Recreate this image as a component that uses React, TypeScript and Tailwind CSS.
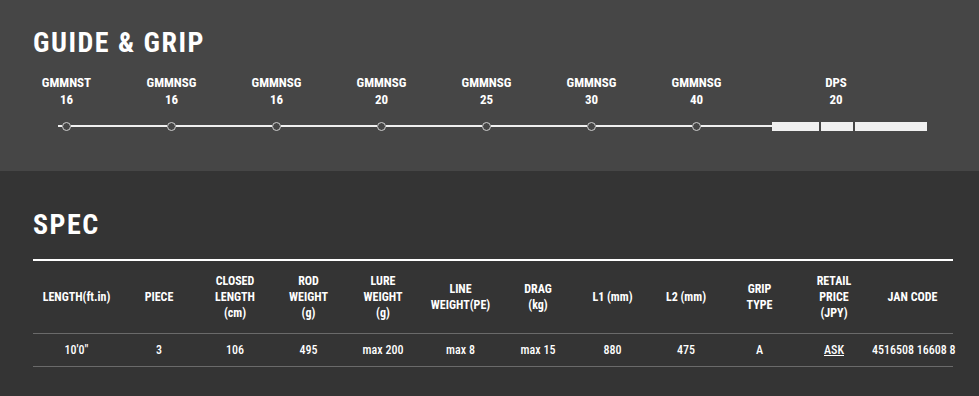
import React from 'react';

const guides = [
  { name: 'GMMNST', size: '16' },
  { name: 'GMMNSG', size: '16' },
  { name: 'GMMNSG', size: '16' },
  { name: 'GMMNSG', size: '20' },
  { name: 'GMMNSG', size: '25' },
  { name: 'GMMNSG', size: '30' },
  { name: 'GMMNSG', size: '40' },
];

const columns = [
  { label: ['LENGTH(ft.in)'], w: 'w-[87px]' },
  { label: ['PIECE'], w: 'w-[78px]' },
  { label: ['CLOSED', 'LENGTH', '(cm)'], w: 'w-[74px]' },
  { label: ['ROD', 'WEIGHT', '(g)'], w: 'w-[73px]' },
  { label: ['LURE', 'WEIGHT', '(g)'], w: 'w-[76px]' },
  { label: ['LINE', 'WEIGHT(PE)'], w: 'w-[79px]' },
  { label: ['DRAG', '(kg)'], w: 'w-[76px]' },
  { label: ['L1 (mm)'], w: 'w-[73px]' },
  { label: ['L2 (mm)'], w: 'w-[74px]' },
  { label: ['GRIP', 'TYPE'], w: 'w-[73px]' },
  { label: ['RETAIL', 'PRICE', '(JPY)'], w: 'w-[76px]' },
  { label: ['JAN CODE'], w: 'w-[81px]' },
];

const values = ['10\'0"', '3', '106', '495', 'max 200', 'max 8', 'max 15', '880', '475', 'A', 'ASK', '4516508 16608 8'];

const Dot = () => (
  <div className="w-[9px] h-[9px] shrink-0 rounded-full border-[1.5px] border-[#cfcfcf] bg-[#464646]" />
);

export default function App() {
  return (
    <div className="w-[979px] h-[396px] overflow-hidden text-white font-['Roboto_Condensed','Roboto',sans-serif] font-stretch-condensed">
      <section className="h-[171px] bg-[#464646] pl-[33px] pt-[27px]">
        <h2 className="text-[28px] leading-[32px] font-bold tracking-[1.5px]">GUIDE &amp; GRIP</h2>
        <div className="flex -ml-[19px] mt-[15px]">
          {guides.map((g, i) => (
            <div key={i} className="w-[105px] text-center text-[13px] font-bold leading-[17px]">
              <div>{g.name}</div>
              <div>{g.size}</div>
            </div>
          ))}
          <div className="w-[174px] text-center text-[13px] font-bold leading-[17px]">
            <div>DPS</div>
            <div>20</div>
          </div>
        </div>
        <div className="flex items-center h-[10px] ml-[25px] mt-[13px]">
          <div className="w-[4px] h-[2px] bg-[#f0f0f0]" />
          {guides.map((_, i) => (
            <React.Fragment key={i}>
              <Dot />
              <div className={`h-[2px] bg-[#f0f0f0] ${i === guides.length - 1 ? 'w-[71px]' : 'w-[96px]'}`} />
            </React.Fragment>
          ))}
          <div className="flex gap-[2px]">
            <div className="w-[47px] h-[9px] bg-[#f0f0f0]" />
            <div className="w-[32px] h-[9px] bg-[#f0f0f0]" />
            <div className="w-[72px] h-[9px] bg-[#f0f0f0]" />
          </div>
        </div>
      </section>
      <section className="h-[225px] bg-[#343434] pl-[33px] pt-[38px]">
        <h2 className="text-[28px] leading-[32px] font-bold tracking-[1.5px]">SPEC</h2>
        <table className="mt-[18px] w-[920px] border-collapse table-fixed border-t-2 border-white">
          <thead>
            <tr className="border-b border-[#6a6a6a]">
              {columns.map((c, i) => (
                <th key={i} className={`${c.w} h-[73px] text-center align-middle text-[12px] font-bold leading-[16px] p-0`}>
                  {c.label.map((l, j) => (
                    <div key={j}>{l}</div>
                  ))}
                </th>
              ))}
            </tr>
          </thead>
          <tbody>
            <tr className="border-b border-[#6a6a6a]">
              {values.map((v, i) => (
                <td key={i} className="h-[33px] text-center text-[12px] font-medium p-0 whitespace-nowrap">
                  {v === 'ASK' ? <span className="underline">{v}</span> : v}
                </td>
              ))}
            </tr>
          </tbody>
        </table>
      </section>
    </div>
  );
}
